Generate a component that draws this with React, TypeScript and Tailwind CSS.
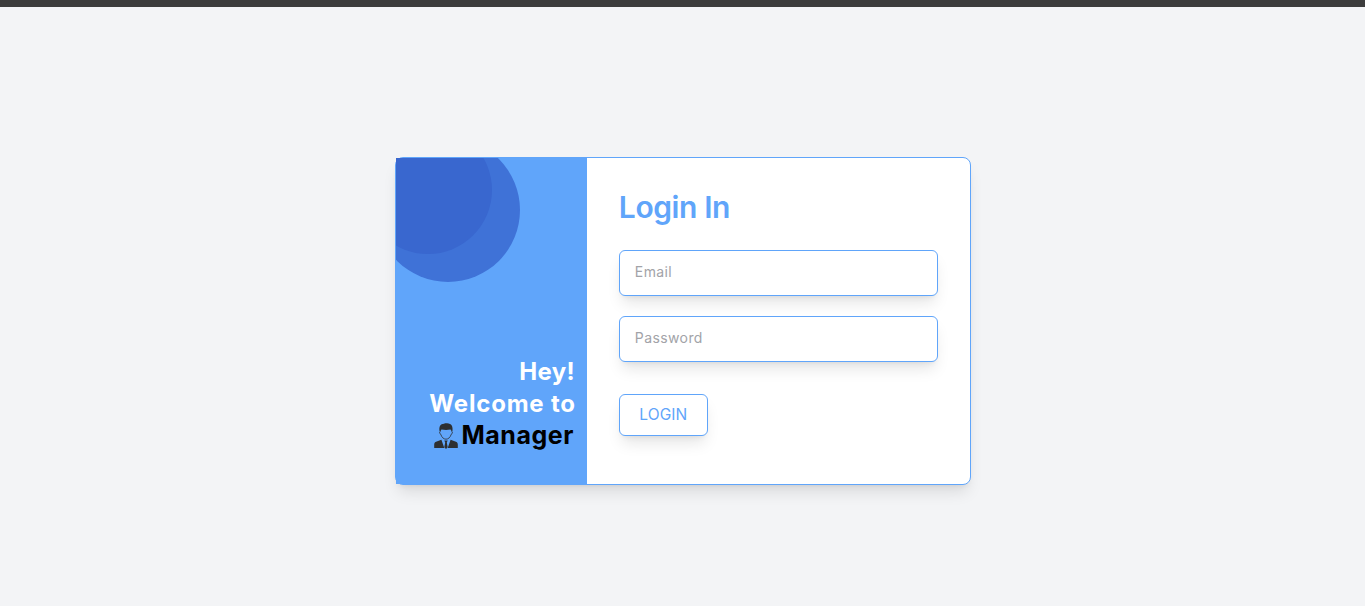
import React from "react";

function ManagerIcon() {
  return (
    <svg viewBox="0 0 24 26" className="mr-1 h-[26px] w-6 shrink-0" aria-hidden="true">
      <path
        d="M6.300 8.500c-1 .2-.9 2.400.5 2.800.8 3 2.900 4.900 5.200 4.900s4.400-1.900 5.200-4.900c1.400-.4 1.500-2.600.5-2.800"
        fill="none"
        stroke="#2d2f31"
        strokeWidth="0.8"
      />
      <path
        d="M5.600 8.600C4.700 3.500 6.300 0.700 10 0.700c1-.4 1.800-.5 3-.4 4.700.2 6.200 3.200 5.400 8.300h-.9c-.2-1-.5-1.500-1-2-3 .5-6.500.4-9 0-.5.500-.8 1-.9 2z"
        fill="#2d2f31"
      />
      <path
        d="M0.200 25v-3.500c0-2 1.200-2.700 3.200-3.300l4-1.500L10.300 25zM23.800 25v-3.500c0-2-1.200-2.700-3.200-3.300l-4-1.500L13.700 25z"
        fill="#2d2f31"
      />
      <path d="M10.300 17.600h3.400l-.9 1.900.9 4.700L12 26l-1.700-1.800.9-4.700z" fill="#2d2f31" />
    </svg>
  );
}

export default function App() {
  return (
    <div className="flex h-[606px] flex-col overflow-hidden bg-[#f3f4f6] font-['Inter',sans-serif]">
      <div className="h-[7px] shrink-0 bg-[#3c3c3c]" />
      <main className="flex justify-center pt-[150px]">
        <div className="flex h-[328px] w-[576px] rounded-lg border border-[#60a5fa] bg-white shadow-lg">
          <section className="relative flex w-1/3 shrink-0 flex-col justify-end overflow-hidden bg-[#60a5fa] pr-[11px] pb-8 text-right text-2xl font-bold text-white">
            <div className="absolute -top-5 -left-5 size-36 rounded-full bg-[#3f72d7]" />
            <div className="absolute -top-8 -left-8 size-32 rounded-full bg-[#3967cf]" />
            <p className="pr-px tracking-[0.3px]">Hey!</p>
            <p className="tracking-[0.8px] whitespace-nowrap">Welcome to</p>
            <div className="flex h-8 items-center justify-end pr-0.5 text-black">
              <ManagerIcon />
              <span className="text-[25px] tracking-[0.5px]">Manager</span>
            </div>
          </section>
          <form className="flex flex-1 flex-col items-start p-8" onSubmit={(e) => e.preventDefault()}>
            <h1 className="-mt-px mb-[25px] text-3xl font-semibold tracking-[-0.4px] text-[#60a5fa]">Login In</h1>
            <input
              type="email"
              placeholder="Email"
              className="mb-5 h-[46px] w-full rounded-md border border-[#60a5fa] bg-white px-[15px] pb-[3px] text-sm tracking-[0.4px] shadow-lg outline-none placeholder:text-[#a2a3a8]"
            />
            <input
              type="password"
              placeholder="Password"
              className="mb-8 h-[46px] w-full rounded-md border border-[#60a5fa] bg-white px-[15px] pb-[3px] text-sm tracking-[0.4px] shadow-lg outline-none placeholder:text-[#a2a3a8]"
            />
            <button className="h-[42px] w-[89px] rounded-md border border-[#60a5fa] bg-white text-[15.5px] tracking-[0.1px] text-[#60a5fa] shadow-lg">
              LOGIN
            </button>
          </form>
        </div>
      </main>
    </div>
  );
}
